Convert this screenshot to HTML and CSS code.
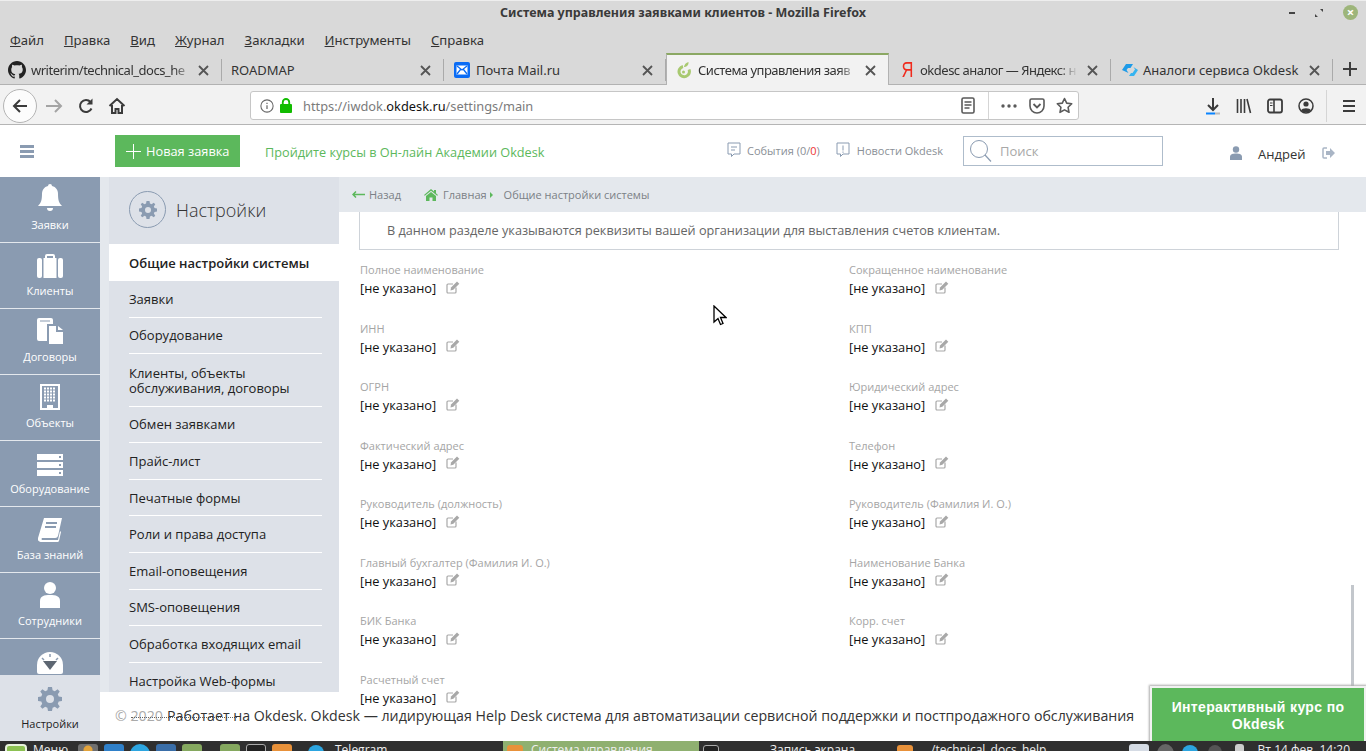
FILE: index.html
```html
<!DOCTYPE html>
<html lang="ru">
<head>
    <meta charset="UTF-8">
    <title>Система управления заявками клиентов</title>
    <link rel="stylesheet" href="styles.css">
</head>
<body>
    <!-- Window title + menu -->
    <div class="titlebar">
        <span class="title-text">Система управления заявками клиентов - Mozilla Firefox</span>
        <div class="win-buttons">
            <span class="win-min"></span>
            <svg class="win-max" width="10" height="10" viewBox="0 0 10 10"><path d="M6 1h3v3zM1 6l3 3H1z" fill="#444"/></svg>
            <span class="win-close">×</span>
        </div>
    </div>
    <div class="menubar">
        <span><u>Ф</u>айл</span>
        <span><u>П</u>равка</span>
        <span><u>В</u>ид</span>
        <span><u>Ж</u>урнал</span>
        <span><u>З</u>акладки</span>
        <span><u>И</u>нструменты</span>
        <span><u>С</u>правка</span>
    </div>

    <!-- Tabs -->
    <div class="tabs">
        <div class="tab">
            <svg width="18" height="18" viewBox="0 0 16 16"><path fill="#222" d="M8 0C3.600 0 0 3.600 0 8c0 3.500 2.300 6.500 5.500 7.600.4.100.5-.2.5-.4v-1.400c-2.200.5-2.700-1-2.700-1-.4-.9-.9-1.200-.9-1.200-.7-.5.100-.5.100-.5.800.100 1.200.800 1.200.800.700 1.200 1.900.900 2.300.700.100-.5.300-.9.500-1.100-1.800-.2-3.600-.9-3.600-4 0-.9.300-1.600.800-2.100-.1-.2-.4-1 .100-2.100 0 0 .700-.2 2.200.800.600-.2 1.300-.3 2-.3s1.400.100 2 .3c1.500-1 2.200-.8 2.200-.8.400 1.100.200 1.900.100 2.100.5.600.8 1.300.8 2.100 0 3.100-1.900 3.700-3.700 3.900.3.300.6.800.6 1.500v2.200c0 .2.100.5.6.4C13.700 14.500 16 11.500 16 8c0-4.400-3.600-8-8-8z"/></svg>
            <span class="tab-label fade">writerim/technical_docs_he</span>
            <svg class="tab-x" width="11" height="11" viewBox="0 0 11 11"><use href="#close"/></svg>
        </div>
        <div class="tab tab-plain">
            <span class="tab-label">ROADMAP</span>
            <svg class="tab-x" width="11" height="11" viewBox="0 0 11 11"><use href="#close"/></svg>
        </div>
        <div class="tab tab-mail">
            <svg width="16" height="16" viewBox="0 0 16 16"><rect width="16" height="16" rx="2" fill="#0a6cf5"/><rect x="2.500" y="3.500" width="11" height="9" fill="#fff"/><path d="M3 4l5 4 5-4M3 12l3.500-4.500M13 12L9.500 7.500" fill="none" stroke="#0a6cf5" stroke-width="1.300"/></svg>
            <span class="tab-label">Почта Mail.ru</span>
            <svg class="tab-x" width="11" height="11" viewBox="0 0 11 11"><use href="#close"/></svg>
        </div>
        <div class="tab tab-active">
            <svg width="14" height="18" viewBox="0 0 14 18"><path d="M6 5.500a5.200 5.200 0 1 0 6 3" fill="none" stroke="#a8c970" stroke-width="3"/><path d="M7 6c.3-2.500 2-4.500 4.500-5 .3 2.700-1.500 5-4.500 5z" fill="#a8c970"/><circle cx="6.500" cy="11" r="1.500" fill="#a8c970"/></svg>
            <span class="tab-label fade">Система управления заяв</span>
            <svg class="tab-x" width="11" height="11" viewBox="0 0 11 11"><use href="#close"/></svg>
        </div>
        <div class="tab tab-ya">
            <span class="ya-icon">Я</span>
            <span class="tab-label fade">okdesc аналог — Яндекс: н</span>
            <svg class="tab-x" width="11" height="11" viewBox="0 0 11 11"><use href="#close"/></svg>
        </div>
        <div class="tab tab-analog">
            <svg width="18" height="16" viewBox="0 0 18 16"><path d="M1 8l4-6h7l-2.500 4H7L5.500 8l2 3z" fill="#1e9be8"/><path d="M17 8l-4 6H8l2-3h1.500L14 7.500 12.500 5z" fill="#36b4f0"/></svg>
            <span class="tab-label">Аналоги сервиса Okdesk</span>
            <svg class="tab-x" width="11" height="11" viewBox="0 0 11 11"><use href="#close"/></svg>
        </div>
        <div class="tab-new">
            <svg width="16" height="16" viewBox="0 0 16 16"><path d="M8 1v14M1 8h14" stroke="#3d3d3d" stroke-width="2"/></svg>
        </div>
    </div>

    <!-- Navigation toolbar -->
    <div class="navbar">
        <div class="back-btn">
            <svg width="20" height="20" viewBox="0 0 20 20"><path d="M17 10H4M10 4l-6 6 6 6" fill="none" stroke="#3b3b3b" stroke-width="2"/></svg>
        </div>
        <svg class="nav-icon forward" width="18" height="18" viewBox="0 0 18 18"><path d="M1 9h15M10 3l6 6-6 6" fill="none" stroke="#a4a4a4" stroke-width="2"/></svg>
        <svg class="nav-icon reload" width="18" height="18" viewBox="0 0 18 18"><path d="M14.500 11.500A6 6 0 1 1 13.500 5" fill="none" stroke="#3b3b3b" stroke-width="2"/><path d="M15.500 1.500v6h-6z" fill="#3b3b3b"/></svg>
        <svg class="nav-icon home" width="18" height="18" viewBox="0 0 18 18"><path d="M1.500 9L9 2l7.500 7M4 8v8h3.500v-4h3v4H14V8" fill="none" stroke="#3b3b3b" stroke-width="2"/></svg>
        <div class="urlbar">
            <svg width="14" height="14" viewBox="0 0 16 16"><circle cx="8" cy="8" r="7" fill="none" stroke="#666" stroke-width="1.200"/><path d="M8 7v4.500M8 4.300v1.400" stroke="#666" stroke-width="1.400"/></svg>
            <svg class="lock" width="12" height="15" viewBox="0 0 13 16"><path d="M3 7V4.500a3.500 3.500 0 0 1 7 0V7" fill="none" stroke="#12bc00" stroke-width="2"/><rect y="6.500" width="13" height="9.500" rx="1" fill="#12bc00"/></svg>
            <span class="url"><span class="url-dim">https://iwdok.</span>okdesk.ru<span class="url-dim">/settings/main</span></span>
            <svg class="reader" width="14" height="17" viewBox="0 0 14 17"><rect x="1" y="1" width="12" height="15" rx="1.500" fill="none" stroke="#5a5a5a" stroke-width="1.600"/><path d="M3.500 5h7M3.500 8h7M3.500 11h5" stroke="#5a5a5a" stroke-width="1.300"/></svg>
            <span class="url-sep"></span>
            <svg class="dots" width="16" height="4" viewBox="0 0 16 4"><circle cx="2" cy="2" r="1.700" fill="#5a5a5a"/><circle cx="8" cy="2" r="1.700" fill="#5a5a5a"/><circle cx="14" cy="2" r="1.700" fill="#5a5a5a"/></svg>
            <svg width="16" height="16" viewBox="0 0 16 16"><path d="M1 2.500A1.500 1.500 0 0 1 2.500 1h11A1.500 1.500 0 0 1 15 2.500V8A7 7 0 0 1 1 8z" fill="none" stroke="#5a5a5a" stroke-width="1.600"/><path d="M4.500 6L8 9.500 11.500 6" fill="none" stroke="#5a5a5a" stroke-width="1.800"/></svg>
            <svg class="star" width="17" height="17" viewBox="0 0 17 17"><path d="M8.500 1.500l2.200 4.600 5 .7-3.600 3.500.9 5-4.500-2.400L4 15.300l.9-5L1.300 6.800l5-.7z" fill="none" stroke="#5a5a5a" stroke-width="1.600" stroke-linejoin="round"/></svg>
        </div>
        <div class="nav-right">
            <svg width="16" height="18" viewBox="0 0 16 18"><path d="M8 1v11M3 8l5 5 5-5" fill="none" stroke="#3b3b3b" stroke-width="2"/><path d="M1 16.500h9" stroke="#0a84ff" stroke-width="2"/><path d="M10 16.500h5" stroke="#bbb" stroke-width="2"/></svg>
            <svg width="16" height="16" viewBox="0 0 16 16"><path d="M1.500 1v14M5 1v14M8.500 1v14M11 1l3.500 14" stroke="#3b3b3b" stroke-width="1.600" fill="none"/></svg>
            <svg width="16" height="16" viewBox="0 0 16 16"><rect x="1" y="1.500" width="14" height="13" rx="2" fill="none" stroke="#3b3b3b" stroke-width="1.800"/><path d="M7 2v12" stroke="#3b3b3b" stroke-width="1.600"/><path d="M3 5h2.500M3 7.500h2.500" stroke="#3b3b3b" stroke-width="1.200"/></svg>
            <svg width="16" height="16" viewBox="0 0 16 16"><circle cx="8" cy="8" r="7" fill="none" stroke="#3b3b3b" stroke-width="1.500"/><circle cx="8" cy="6" r="2.600" fill="#3b3b3b"/><path d="M3 12.500c1-3 9-3 10 0-2 2.500-8 2.500-10 0z" fill="#3b3b3b"/></svg>
            <span class="nav-sep"></span>
            <svg width="14" height="14" viewBox="0 0 14 14"><path d="M1 2h12M1 7h12M1 12h12" stroke="#3b3b3b" stroke-width="2"/></svg>
        </div>
    </div>

    <!-- App -->
    <div class="app">
        <header class="app-header">
            <div class="burger"><i></i><i></i><i></i></div>
            <a class="new-btn">
                <svg width="15" height="15" viewBox="0 0 15 15"><path d="M7.500 0v15M0 7.500h15" stroke="#fff" stroke-width="1"/></svg>
                <span>Новая заявка</span>
            </a>
            <a class="academy">Пройдите курсы в Он-лайн Академии Okdesk</a>
            <span class="hdr-link events">
                <svg width="14" height="16" viewBox="0 0 14 16"><path d="M1 1h12v11H7l-2.500 2.500V12H1z" fill="none" stroke="#8a9bb1"/><path d="M4 5h6M4 8h4" stroke="#8a9bb1"/></svg>
                <span>События (0/<b>0</b>)</span>
            </span>
            <span class="hdr-link news">
                <svg width="14" height="16" viewBox="0 0 14 16"><path d="M1 1h12v11H7l-2.500 2.500V12H1z" fill="none" stroke="#8a9bb1"/><path d="M7 3.500v5M7 9.500v1.300" stroke="#8a9bb1"/></svg>
                <span>Новости Okdesk</span>
            </span>
            <div class="search">
                <svg width="24" height="24" viewBox="0 0 24 24"><circle cx="10" cy="10" r="8.500" fill="none" stroke="#8a9bb1" stroke-width="1"/><path d="M16 16l6 6.500" stroke="#8a9bb1" stroke-width="1.200"/></svg>
                <span>Поиск</span>
            </div>
            <svg class="user-ico" width="12" height="14" viewBox="0 0 12 14"><circle cx="6" cy="3.500" r="3.200" fill="#8a9bb1"/><path d="M0 14v-3c0-3 3-3.500 6-3.500s6 .5 6 3.500v3z" fill="#8a9bb1"/></svg>
            <span class="user-name">Андрей</span>
            <svg class="logout" width="13" height="12" viewBox="0 0 13 12"><path d="M5 1H2a1 1 0 0 0-1 1v8a1 1 0 0 0 1 1h3" fill="none" stroke="#a9b5c5" stroke-width="1.500"/><path d="M4 4h4V1l5 5-5 5V8H4z" fill="#a9b5c5"/></svg>
        </header>

        <div class="app-body">
            <nav class="rail">
                <a class="rail-item">
                    <svg width="24" height="28" viewBox="0 0 24 28"><path d="M12 0a2 2 0 0 1 2 2c4 1 6 4 6 8 0 6 1 9 4 12H0c3-3 4-6 4-12 0-4 2-7 6-8a2 2 0 0 1 2-2zM9 24h6a3 3 0 0 1-6 0z" fill="#fff"/></svg>
                    <span>Заявки</span>
                </a>
                <a class="rail-item">
                    <svg width="26" height="24" viewBox="0 0 26 24"><path d="M8 5V2a2 2 0 0 1 2-2h6a2 2 0 0 1 2 2v3h-2V2h-6v3z" fill="#fff"/><rect x="0" y="4" width="5" height="20" rx="2" fill="#fff"/><rect x="6.500" y="4" width="13" height="20" fill="#fff"/><rect x="21" y="4" width="5" height="20" rx="2" fill="#fff"/></svg>
                    <span>Клиенты</span>
                </a>
                <a class="rail-item">
                    <svg width="26" height="26" viewBox="0 0 26 26"><path d="M0 2a2 2 0 0 1 2-2h12a2 2 0 0 1 2 2v4H10v17H2a2 2 0 0 1-2-2z" fill="#fff"/><path d="M3 3h10" stroke="#8a9bb1"/><path d="M12 8h7v6h7v12H12z" fill="#fff"/><path d="M21 8l5 4h-5z" fill="#fff"/></svg>
                    <span>Договоры</span>
                </a>
                <a class="rail-item">
                    <svg width="20" height="26" viewBox="0 0 20 26"><path fill="#fff" fill-rule="evenodd" d="M0 0h20v26H0zM2 2v22h5v-3h6v3h5V2z"/><path d="M4 4.500h12M4 7.500h12M4 10.500h12M4 13.500h12M4 16.500h12" stroke="#fff" stroke-width="2" stroke-dasharray="2 1"/></svg>
                    <span>Объекты</span>
                </a>
                <a class="rail-item">
                    <svg width="26" height="22" viewBox="0 0 26 22"><path fill="#fff" fill-rule="evenodd" d="M0 0h26v6H0zM22 2v2h2V2zM0 8h26v6H0zM22 10v2h2v-2zM0 16h26v6H0zM22 18v2h2v-2z"/></svg>
                    <span>Оборудование</span>
                </a>
                <a class="rail-item">
                    <svg width="24" height="24" viewBox="0 0 24 24"><path fill="#fff" fill-rule="evenodd" d="M6 0h18l-4 18a3 3 0 0 1-3 2H4a1.500 1.500 0 0 0 0 2h16l2-9 1 1-2 9a2 2 0 0 1-2 1H3a3 3 0 0 1-3-4zM8 4v2h11V4zM7 8v2h11V8z"/></svg>
                    <span>База знаний</span>
                </a>
                <a class="rail-item">
                    <svg width="20" height="26" viewBox="0 0 20 26"><circle cx="10" cy="6" r="6" fill="#fff"/><path d="M0 26v-7c0-5 4-6 10-6s10 1 10 6v7z" fill="#fff"/></svg>
                    <span>Сотрудники</span>
                </a>
                <a class="rail-item gauge">
                    <svg width="26" height="26" viewBox="0 0 26 26"><path fill="#fff" d="M13 4a13 13 0 0 1 13 13v7a2 2 0 0 1-2 2H2a2 2 0 0 1-2-2v-7A13 13 0 0 1 13 4z"/><path fill="#5d6672" d="M6 13h14l-7 9z"/><path d="M13 6v3M5 10l2 2M21 10l-2 2" stroke="#8a9bb1" stroke-width="1.500"/></svg>
                </a>
                <a class="rail-settings">
                    <svg class="gear" width="24" height="24" viewBox="0 0 24 24"><use href="#gear"/></svg>
                    <span>Настройки</span>
                </a>
            </nav>

            <aside class="side">
                <div class="side-head">
                    <span class="side-circle">
                        <svg width="18" height="18" viewBox="0 0 24 24"><use href="#gear"/></svg>
                    </span>
                    <span class="side-title">Настройки</span>
                </div>
                <a class="side-item current">Общие настройки системы</a>
                <a class="side-item">Заявки</a>
                <a class="side-item">Оборудование</a>
                <a class="side-item two-lines">Клиенты, объекты обслуживания, договоры</a>
                <a class="side-item">Обмен заявками</a>
                <a class="side-item">Прайс-лист</a>
                <a class="side-item">Печатные формы</a>
                <a class="side-item">Роли и права доступа</a>
                <a class="side-item">Email-оповещения</a>
                <a class="side-item">SMS-оповещения</a>
                <a class="side-item">Обработка входящих email</a>
                <a class="side-item">Настройка Web-формы</a>
            </aside>

            <main class="main">
                <div class="crumbs">
                    <svg width="13" height="7" viewBox="0 0 13 7"><path d="M13 3.500H2M4 .5l-3 3 3 3" fill="none" stroke="#5cb85c" stroke-width="1.500"/></svg>
                    <span class="crumb-back">Назад</span>
                    <svg class="crumb-home" width="14" height="12" viewBox="0 0 14 12"><path fill="#5cb85c" d="M7 0l3 2.500V1h2v3.200L14 6l-.8.8L7 1.700.8 6.800 0 6zM2 7l5-4 5 4v5H8.500V8.500h-3V12H2z"/></svg>
                    <span>Главная</span>
                    <span class="crumb-arrow"></span>
                    <span>Общие настройки системы</span>
                </div>
                <div class="content">
                    <div class="notice">В данном разделе указываются реквизиты вашей организации для выставления счетов клиентам.</div>
                    <div class="fields">
                        <div class="field"><label>Полное наименование</label><p>[не указано]<svg class="edit"><use href="#edit"/></svg></p></div>
                        <div class="field"><label>Сокращенное наименование</label><p>[не указано]<svg class="edit"><use href="#edit"/></svg></p></div>
                        <div class="field"><label>ИНН</label><p>[не указано]<svg class="edit"><use href="#edit"/></svg></p></div>
                        <div class="field"><label>КПП</label><p>[не указано]<svg class="edit"><use href="#edit"/></svg></p></div>
                        <div class="field"><label>ОГРН</label><p>[не указано]<svg class="edit"><use href="#edit"/></svg></p></div>
                        <div class="field"><label>Юридический адрес</label><p>[не указано]<svg class="edit"><use href="#edit"/></svg></p></div>
                        <div class="field"><label>Фактический адрес</label><p>[не указано]<svg class="edit"><use href="#edit"/></svg></p></div>
                        <div class="field"><label>Телефон</label><p>[не указано]<svg class="edit"><use href="#edit"/></svg></p></div>
                        <div class="field"><label>Руководитель (должность)</label><p>[не указано]<svg class="edit"><use href="#edit"/></svg></p></div>
                        <div class="field"><label>Руководитель (Фамилия И. О.)</label><p>[не указано]<svg class="edit"><use href="#edit"/></svg></p></div>
                        <div class="field"><label>Главный бухгалтер (Фамилия И. О.)</label><p>[не указано]<svg class="edit"><use href="#edit"/></svg></p></div>
                        <div class="field"><label>Наименование Банка</label><p>[не указано]<svg class="edit"><use href="#edit"/></svg></p></div>
                        <div class="field"><label>БИК Банка</label><p>[не указано]<svg class="edit"><use href="#edit"/></svg></p></div>
                        <div class="field"><label>Корр. счет</label><p>[не указано]<svg class="edit"><use href="#edit"/></svg></p></div>
                        <div class="field"><label>Расчетный счет</label><p>[не указано]<svg class="edit"><use href="#edit"/></svg></p></div>
                    </div>
                    <span class="scrollbar"></span>
                </div>
            </main>

            <footer class="app-footer">
                <span class="copy">© 2020</span>
                <span class="copy-line"></span>
                <span class="powered">Работает на Okdesk. Okdesk — лидирующая Help Desk система для автоматизации сервисной поддержки и постпродажного обслуживания</span>
            </footer>
            <a class="course-btn">Интерактивный курс по Okdesk</a>
            <svg class="cursor" width="14" height="21" viewBox="0 0 14 21"><path d="M1 1v16l4-3.500 2.500 6 2.500-1-2.500-6H13z" fill="#fff" stroke="#000" stroke-width="1.300"/></svg>
        </div>
    </div>

    <!-- Desktop panel, only its top edge is on screen -->
    <div class="taskbar">
        <span class="tb-mint"></span>
        <span class="tb-label menu-label">Меню</span>
        <span class="tb-ico gold"></span>
        <span class="tb-ico blue"></span>
        <span class="tb-ico cyan"></span>
        <span class="tb-ico navy"></span>
        <span class="tb-ico green"></span>
        <span class="tb-gap"></span>
        <span class="tb-ico green"></span>
        <span class="tb-ico dark"></span>
        <span class="tb-ico orange"></span>
        <span class="tb-gap wide"></span>
        <span class="tb-ico cyan small"></span>
        <span class="tb-label tg-label">Telegram</span>
        <span class="tb-task active"><span class="tb-ico orange small"></span><span class="tb-label">Система управления</span></span>
        <span class="tb-task second"><span class="tb-ico dark small"></span><span class="tb-label">Запись экрана</span></span>
        <span class="tb-task third"><span class="tb-ico orange small"></span><span class="tb-label">/technical_docs_help</span></span>
        <span class="tb-tray">
            <span class="tb-ico shield"></span>
            <span class="tb-ico grey wide-17"></span>
            <span class="tb-ico cyan small"></span>
            <span class="tb-ico grey small tray-dim"></span>
            <span class="tb-ico battery"></span>
            <span class="tb-label tray-clock">Вт 14 фев, 14:20</span>
        </span>
    </div>

    <svg class="defs" width="0" height="0">
        <symbol id="gear" viewBox="0 0 24 24">
            <path fill="#8a9bb1" fill-rule="evenodd" d="M10 0h4l.6 3.300 2.200.9L19.600 2.300l2.100 2.100-1.900 2.800.9 2.200 3.300.6v4l-3.300.6-.9 2.200 1.900 2.800-2.100 2.100-2.800-1.900-2.200.9L14 24h-4l-.6-3.300-2.200-.9-2.800 1.900-2.100-2.100 1.900-2.800-.9-2.200L0 14v-4l3.300-.6.9-2.200L2.300 4.400l2.100-2.100 2.800 1.900 2.200-.9zM12 8a4 4 0 1 0 0 8 4 4 0 0 0 0-8z"/>
        </symbol>
        <symbol id="edit" viewBox="0 0 14 13">
            <path d="M10 6.500V11a1 1 0 0 1-1 1H2a1 1 0 0 1-1-1V4a1 1 0 0 1 1-1h5" fill="none" stroke="#a8a8a8" stroke-width="1.200"/>
            <path d="M5 6.500l6-6 2.300 2.300-6 6L4.500 9.500z" fill="#a8a8a8"/>
        </symbol>
        <symbol id="close" viewBox="0 0 11 11">
            <path d="M1 1l9 9M10 1l-9 9" stroke="#555" stroke-width="1.800"/>
        </symbol>
    </svg>
</body>
</html>
```

FILE: styles.css
```css
/* General Styles */
* {
    box-sizing: border-box;
}
html, body {
    margin: 0;
    padding: 0;
    height: 751px;
    overflow: hidden;
}
body {
    display: flex;
    flex-direction: column;
    font-family: "Open Sans", sans-serif;
    font-size: 13px;
    color: #222;
    background-color: #fff;
}
.defs {
    position: absolute;
}

/* Window title */
.titlebar {
    height: 28px;
    flex: none;
    display: flex;
    align-items: center;
    justify-content: center;
    padding-bottom: 4px;
    position: relative;
    background-color: #d9d9d9;
    border-top: 1px solid #eee;
    font-family: "Noto Sans", sans-serif;
    font-size: 12.500px;
    font-weight: 700;
    color: #3a3a3a;
}
.win-buttons {
    position: absolute;
    right: 8px;
    top: 4px;
    display: flex;
    align-items: center;
    gap: 19px;
}
.win-min {
    width: 6px;
    height: 2px;
    background-color: #444;
}
.win-close {
    width: 15px;
    height: 15px;
    border-radius: 50%;
    background-color: #9db57a;
    color: #fff;
    font-size: 13px;
    line-height: 14px;
    text-align: center;
}

/* Menu */
.menubar {
    height: 25px;
    flex: none;
    display: flex;
    align-items: center;
    gap: 20px;
    padding: 0 0 2px 10px;
    background-color: #d9d9d9;
    font-family: "Noto Sans", sans-serif;
    font-size: 13.150px;
    color: #333;
}

/* Tabs */
.tabs {
    height: 32px;
    flex: none;
    display: flex;
    background-color: #d9d9d9;
    border-bottom: 1px solid #b2b2b2;
    font-family: "Noto Sans", sans-serif;
    font-size: 13px;
    color: #333;
}
.tab {
    width: 222px;
    height: 22px;
    margin-top: 6px;
    display: flex;
    align-items: center;
    gap: 5px;
    padding: 0 12px 0 8px;
    border-right: 1px solid #aaa;
}
.tab-plain { padding-left: 9px; }
.tab-mail { padding-left: 10px; gap: 6px; }
.tab-ya { padding-left: 11px; gap: 9px; border-right: 1px solid #aaa; }
.tab-analog { padding-left: 10px; gap: 4px; }
.tab-active {
    width: 223px;
    height: 32px;
    margin-top: 0;
    margin-bottom: -1px;
    padding-left: 10px;
    gap: 7px;
    background-color: #f2f2f2;
    border-top: 2px solid #8ba863;
    border-right: 1px solid #b2b2b2;
    border-left: 1px solid #b2b2b2;
}
.tab-label {
    flex: 1;
    white-space: nowrap;
}
.fade {
    letter-spacing: -0.500px;
    -webkit-mask-image: linear-gradient(to right, #000 88%, transparent);
    mask-image: linear-gradient(to right, #000 88%, transparent);
}
.tab-x {
    flex: none;
}
.ya-icon {
    width: 11px;
    color: #f02b1d;
    font-family: "Liberation Sans", sans-serif;
    font-size: 22px;
    line-height: 20px;
    text-align: center;
    transform: scaleX(0.75);
}
.tab-new {
    flex: 1;
    display: flex;
    align-items: center;
    justify-content: center;
}

/* Navigation toolbar */
.navbar {
    height: 40px;
    flex: none;
    display: flex;
    align-items: center;
    padding: 2px 0 0 3px;
    background-color: #f2f2f2;
    border-bottom: 1px solid #b5b5b5;
}
.back-btn {
    width: 34px;
    height: 34px;
    flex: none;
    display: flex;
    align-items: center;
    justify-content: center;
    border-radius: 50%;
    border: 1px solid #b4b4b4;
    background-color: #fcfcfc;
}
.nav-icon {
    flex: none;
}
.forward { margin-left: 8px; }
.reload { margin-left: 14px; }
.home { margin-left: 13px; }
.urlbar {
    width: 829px;
    height: 29px;
    flex: none;
    margin-left: 124px;
    display: flex;
    align-items: center;
    gap: 6px;
    padding: 0 5px 0 9px;
    background-color: #fff;
    border: 1px solid #c6c6c6;
    border-radius: 3px;
    font-family: "Noto Sans", sans-serif;
    font-size: 12.800px;
    color: #111;
}
.url {
    flex: 1;
    margin-left: 5px;
    white-space: nowrap;
}
.url-dim {
    color: #7b7b7b;
}
.reader { margin-right: 7px; }
.url-sep {
    width: 1px;
    height: 27px;
    background-color: #d5d5d5;
    margin-right: 6px;
}
.dots {
    margin-right: 6px;
}
.star { margin-left: 5px; }
.nav-right {
    flex: 1;
    display: flex;
    align-items: center;
    gap: 15px;
    padding-left: 126px;
}
.nav-sep {
    width: 1px;
    height: 32px;
    background-color: #d5d5d5;
    margin: 0 0 0 -3px;
}

/* App header */
.app {
    flex: 1;
    min-height: 0;
    display: flex;
    flex-direction: column;
}
.app-header {
    height: 52px;
    flex: none;
    display: flex;
    align-items: center;
    background-color: #fff;
}
.burger {
    width: 14px;
    margin-left: 20px;
    display: flex;
    flex-direction: column;
    gap: 2px;
}
.burger i {
    height: 3px;
    background-color: #8a9bb1;
}
.new-btn {
    width: 125px;
    height: 32px;
    margin-left: 81px;
    display: flex;
    align-items: center;
    gap: 5px;
    padding-left: 11px;
    background-color: #5cb85c;
    color: #fff;
    font-size: 12.800px;
}
.academy {
    margin: 1px 0 0 25px;
    width: 462px;
    color: #5cb85c;
    font-size: 12.700px;
}
.hdr-link {
    display: flex;
    align-items: center;
    gap: 6px;
    margin-top: -2px;
    font-size: 11px;
    color: #8a8f96;
}
.hdr-link b {
    color: #e33;
    font-weight: 400;
}
.hdr-link.news {
    margin-left: 16px;
    gap: 7px;
}
.search {
    width: 200px;
    height: 30px;
    margin-left: 20px;
    display: flex;
    align-items: center;
    gap: 7px;
    padding-left: 5px;
    border: 1px solid #aebccb;
    color: #a8a8a8;
    font-size: 13px;
}
.user-ico {
    margin-left: 67px;
    margin-top: 4px;
}
.user-name {
    margin-left: 16px;
    margin-top: 5px;
    color: #333;
    font-size: 13px;
}
.logout {
    margin-left: 17px;
    margin-top: 3px;
}

/* Body area */
.app-body {
    flex: 1;
    min-height: 0;
    display: flex;
    position: relative;
    overflow: hidden;
    background-color: #e4e8ed;
}
.rail {
    width: 100px;
    flex: none;
    background-color: #8a9bb1;
}
.rail-item {
    height: 66px;
    display: flex;
    flex-direction: column;
    align-items: center;
    justify-content: flex-end;
    gap: 5px;
    padding-bottom: 10px;
    border-bottom: 1px solid #e4e8ed;
    color: #fff;
    font-size: 11px;
}
.rail-item.gauge {
    padding-bottom: 30px;
}
.rail-settings {
    position: absolute;
    left: 0;
    bottom: 0;
    width: 100px;
    height: 66px;
    display: flex;
    flex-direction: column;
    align-items: center;
    gap: 5px;
    padding-top: 12px;
    background-color: #dde1e8;
    color: #222;
    font-size: 11px;
}

/* Settings menu */
.side {
    width: 230px;
    flex: none;
    margin-left: 9px;
    background-color: #dde1e8;
}
.side-head {
    height: 67px;
    display: flex;
    align-items: center;
    gap: 10px;
    padding: 0 0 2px 20px;
}
.side-circle {
    width: 37px;
    height: 37px;
    display: flex;
    align-items: center;
    justify-content: center;
    border: 1px solid #8a9bb1;
    border-radius: 50%;
}
.side-title {
    font-size: 18px;
    font-weight: 300;
    color: #333;
}
.side-item {
    display: flex;
    align-items: center;
    height: 36.600px;
    margin-left: 20px;
    margin-right: 17px;
    padding-top: 1px;
    border-bottom: 1px solid #fff;
    font-size: 13px;
    line-height: 15px;
    color: #222;
}
.side-item.two-lines {
    height: 52.500px;
    padding-top: 2px;
}
.side-item.current {
    height: 37px;
    margin: 0;
    padding-left: 20px;
    background-color: #fff;
    font-weight: 600;
    border-bottom: 0;
}

/* Main column */
.main {
    flex: 1;
    min-width: 0;
    margin-bottom: 35px;
    position: relative;
    z-index: 1;
    display: flex;
    flex-direction: column;
}
.crumbs {
    height: 35px;
    flex: none;
    display: flex;
    align-items: center;
    padding-left: 13px;
    font-size: 11px;
    color: #7b8086;
}
.crumb-back {
    margin-left: 4px;
}
.crumb-home {
    margin-left: 23px;
    margin-right: 5px;
}
.crumb-arrow {
    width: 0;
    height: 0;
    margin: 0 11px 0 3px;
    border-left: 3px solid #5cb85c;
    border-top: 3px solid transparent;
    border-bottom: 3px solid transparent;
}
.content {
    flex: 1;
    position: relative;
    overflow: hidden;
    padding: 0 27px 0 20px;
    background-color: #fff;
}
.notice {
    height: 38px;
    padding: 9px 0 0 27px;
    border: 1px solid #ced3d9;
    border-top: 0;
    font-size: 12.680px;
    color: #666;
}
.fields {
    display: grid;
    grid-template-columns: 489px 1fr;
    grid-auto-rows: 58.500px;
    padding: 12px 0 0 1px;
}
.field label {
    display: block;
    font-size: 11px;
    line-height: 15px;
    color: #a5a5a5;
}
.field p {
    margin: 3px 0 0;
    display: flex;
    align-items: center;
    font-size: 12.800px;
    line-height: 17px;
    color: #111;
}
.edit {
    width: 14px;
    height: 13px;
    margin: -3px 0 0 10px;
}
.scrollbar {
    position: absolute;
    top: 373px;
    right: 12px;
    width: 3px;
    height: 110px;
    background-color: #c3c7cc;
}

/* Footer */
.app-footer {
    position: absolute;
    left: 100px;
    right: 0;
    bottom: 0;
    height: 49px;
    background-color: #fff;
}
.copy {
    position: absolute;
    left: 15px;
    top: 14px;
    font-size: 14.200px;
    color: #aaa;
    white-space: nowrap;
}
.copy-line {
    position: absolute;
    left: 31px;
    top: 25px;
    width: 106px;
    border-top: 1px dotted #666;
}
.powered {
    position: absolute;
    left: 67px;
    top: 14px;
    font-size: 14.200px;
    color: #333;
    white-space: nowrap;
}
.course-btn {
    position: absolute;
    right: 2px;
    bottom: 0;
    z-index: 2;
    width: 212px;
    height: 53px;
    display: flex;
    align-items: center;
    justify-content: center;
    padding: 2px 14px 0;
    text-align: center;
    background-color: #5cb85c;
    box-shadow: 0 0 0 2px #f1f1f1, 0 0 2px 3px #aaa;
    color: #fff;
    font-family: "Liberation Sans", sans-serif;
    font-weight: 700;
    font-size: 14px;
    line-height: 17px;
    letter-spacing: 0.350px;
}
.cursor {
    position: absolute;
    left: 713px;
    top: 128px;
    z-index: 2;
}

/* Panel */
.taskbar {
    height: 10px;
    flex: none;
    display: flex;
    align-items: flex-start;
    gap: 6px;
    padding: 3px 0 0 5px;
    overflow: hidden;
    background-color: #2f2f2f;
    color: #eee;
    font-size: 12px;
}
.tb-mint {
    width: 22px;
    height: 20px;
    border-radius: 4px;
    background-color: #8cc152;
    border: 2px solid #e8f2dc;
}
.tb-label {
    margin-top: -1px;
    line-height: 14px;
    white-space: nowrap;
}
.menu-label {
    width: 39px;
}
.tg-label {
    width: 60px;
    margin-left: 5px;
}
.tb-ico {
    width: 20px;
    height: 20px;
    flex: none;
    border-radius: 3px;
}
.tb-ico.small { width: 16px; height: 16px; margin-top: 1px; }
.tb-ico.gold { background: radial-gradient(circle at 50% 30%, #e3a33a 0 4px, #6f6f6f 5px); }
.tb-ico.blue { background-color: #2f80c9; }
.tb-ico.cyan { background-color: #2ca5e0; border-radius: 50%; }
.tb-ico.navy { background-color: #3a6ea8; }
.tb-ico.green { background-color: #85a85f; }
.tb-ico.dark { background-color: #222; border: 1px solid #aaa; }
.tb-ico.orange { background-color: #e8913a; }
.tb-ico.grey { background-color: #666; border-radius: 50%; }
.tb-ico.shield { background-color: #d5dbe4; }
.tb-ico.battery { width: 9px; margin-left: 5px; background-color: #ccc; }
.tb-ico.wide-17 { width: 17px; }
.tb-ico.tray-dim { width: 14px; margin-left: 2px; background-color: #555; }
.tb-gap { width: 6px; }
.tb-gap.wide { width: 4px; }
.tb-task {
    width: 194px;
    height: 10px;
    flex: none;
    display: flex;
    gap: 8px;
    margin-top: -3px;
    padding: 3px 0 0 4px;
    line-height: 14px;
    white-space: nowrap;
}
.tb-task.active {
    margin-left: 102px;
    width: 196px;
    background-color: #8fb070;
}
.tb-task.second .tb-label { margin-left: 43px; }
.tb-task.third .tb-label { margin-left: 10px; }
.tb-task.second,
.tb-task.active { margin-right: -6px; }
.tb-tray {
    display: flex;
    gap: 8px;
    margin-left: auto;
    padding-right: 16px;
}
.tray-clock {
    margin-left: 6px;
}
```
